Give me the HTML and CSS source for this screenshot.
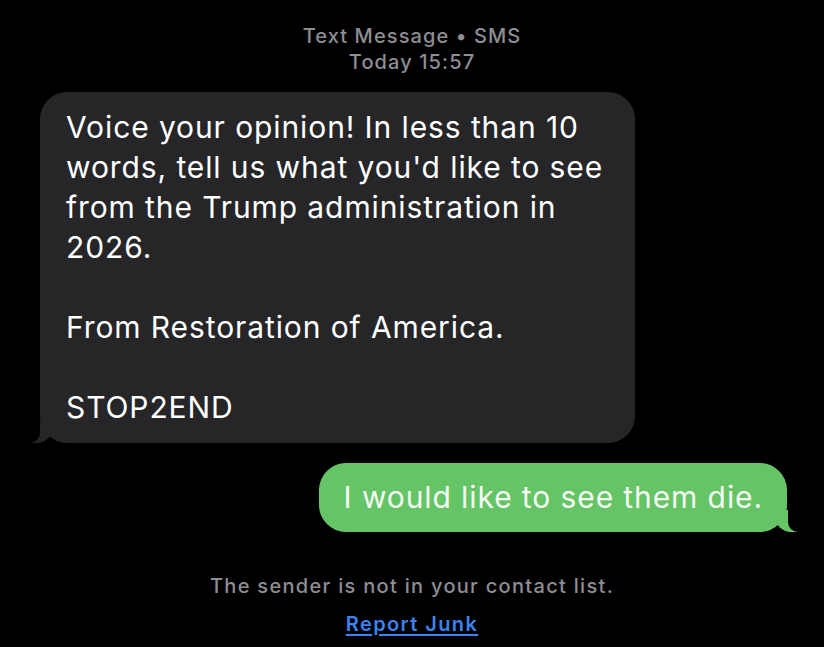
FILE: index.html
```html
<!DOCTYPE html>
<html lang="en">
<head>
    <meta charset="UTF-8">
    <meta name="viewport" content="width=device-width, initial-scale=1.0">
    <title>Text Message</title>
    <link rel="stylesheet" href="styles.css">
</head>
<body>
    <div class="thread">
        <div class="thread-header">
            <div>Text Message • SMS</div>
            <div>Today 15:57</div>
        </div>
        <div class="bubble received">
            Voice your opinion! In less than 10<br>
            words, tell us what you'd like to see<br>
            from the Trump administration in<br>
            2026.<br>
            <br>
            From Restoration of America.<br>
            <br>
            STOP2END
        </div>
        <div class="bubble sent">I would like to see them die.</div>
        <div class="thread-footer">
            <div class="notice">The sender is not in your contact list.</div>
            <a class="report" href="#">Report Junk</a>
        </div>
    </div>
</body>
</html>
```

FILE: styles.css
```css
body {
    margin: 0;
    background: #000;
    color: #fff;
    font-family: Inter, "Noto Sans", sans-serif;
    height: 100vh;
    overflow: hidden;
}
.thread {
    display: flex;
    flex-direction: column;
    padding: 23px 0 0;
}
.thread-header {
    text-align: center;
    color: #8e8e93;
    font-size: 20px;
    line-height: 26px;
    font-weight: 500;
    letter-spacing: 1.1px;
    margin-bottom: 17px;
}
.bubble {
    position: relative;
    font-size: 30px;
    line-height: 40px;
    letter-spacing: 0.9px;
    border-radius: 27px;
    white-space: nowrap;
}
.received {
    align-self: flex-start;
    margin-left: 40px;
    width: 543px;
    padding: 15px 26px 16px;
    background: #262628;
}
.sent {
    align-self: flex-end;
    margin: 20px 37px 0 0;
    padding: 14px 24px 15px 25px;
    background: #65c466;
    color: #f4fbf3;
}
.received::before,
.sent::before {
    content: "";
    position: absolute;
    bottom: 0;
    width: 22px;
    height: 22px;
}
.received::before {
    left: -9px;
    background: #262628;
    border-bottom-right-radius: 16px;
}
.received::after,
.sent::after {
    content: "";
    position: absolute;
    bottom: 0;
    width: 11px;
    height: 22px;
    background: #000;
}
.received::after {
    left: -11px;
    border-bottom-right-radius: 10px;
}
.sent::before {
    right: -10px;
    background: #65c466;
    border-bottom-left-radius: 16px;
}
.sent::after {
    right: -12px;
    border-bottom-left-radius: 10px;
}
.thread-footer {
    display: flex;
    flex-direction: column;
    align-items: center;
    margin-top: 41px;
    font-size: 20px;
    line-height: 26px;
    letter-spacing: 1.3px;
}
.notice {
    color: #8e8e93;
    font-weight: 500;
}
.report {
    margin-top: 12px;
    color: #3d82ee;
    font-weight: 600;
    letter-spacing: 1.4px;
    text-decoration: underline;
    text-underline-offset: 3px;
}
```
